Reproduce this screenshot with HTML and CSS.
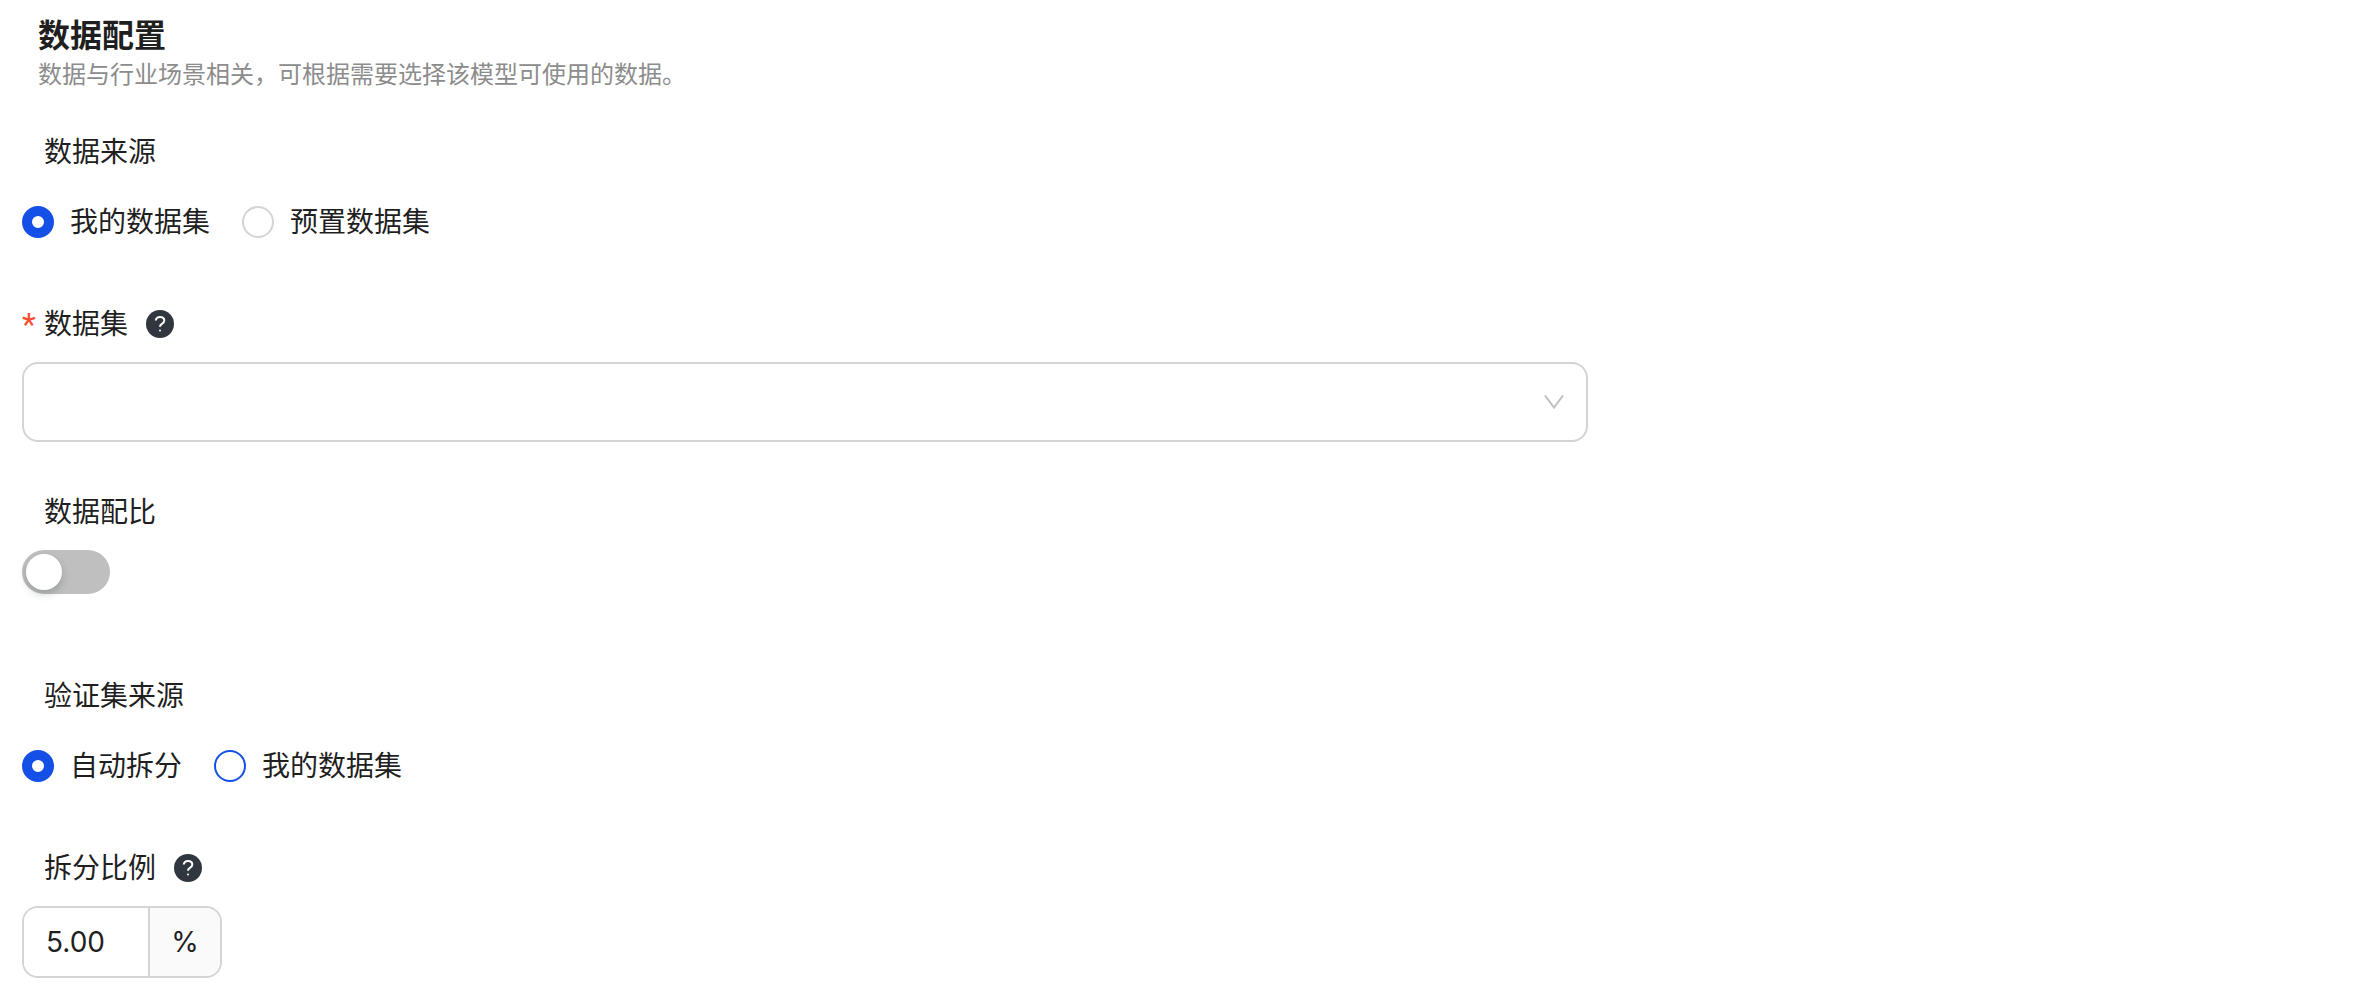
FILE: index.html
```html
<!DOCTYPE html>
<html lang="zh-CN">
<head>
    <meta charset="UTF-8">
    <meta name="viewport" content="width=device-width, initial-scale=1.0">
    <title>数据配置</title>
    <link rel="stylesheet" href="styles.css">
</head>
<body>
    <header class="section-header">
        <h1>数据配置</h1>
        <p>数据与行业场景相关，可根据需要选择该模型可使用的数据。</p>
    </header>

    <form class="config-form">
        <div class="form-item" role="radiogroup" aria-labelledby="source-label">
            <div class="form-label" id="source-label">数据来源</div>
            <div class="radio-group">
                <label class="radio"><input type="radio" name="source" checked><span>我的数据集</span></label>
                <label class="radio"><input type="radio" name="source"><span>预置数据集</span></label>
            </div>
        </div>

        <div class="form-item">
            <div class="form-label required">
                <label for="dataset">数据集</label>
                <svg class="help" viewBox="0 0 28 28" aria-hidden="true">
                    <circle cx="14" cy="14" r="14"/>
                    <path d="M9.800 10.500C10 8.300 11.700 6.900 14 6.900c2.500 0 4.300 1.400 4.300 3.600 0 1.800-1 2.600-2.400 3.400-1.300.7-1.900 1.300-1.900 2.900"/>
                    <circle class="dot" cx="14" cy="20.500" r="1"/>
                </svg>
            </div>
            <div class="select-wrap">
                <select id="dataset">
                    <option value=""></option>
                </select>
                <svg class="arrow" viewBox="0 0 20 14" aria-hidden="true">
                    <path d="M1 .5L10 12.500 19 .5"/>
                </svg>
            </div>
        </div>

        <div class="form-item">
            <div class="form-label"><label for="ratio">数据配比</label></div>
            <div class="switch-row">
                <input type="checkbox" role="switch" class="switch" id="ratio">
            </div>
        </div>

        <div class="form-item" role="radiogroup" aria-labelledby="valid-label">
            <div class="form-label" id="valid-label">验证集来源</div>
            <div class="radio-group">
                <label class="radio"><input type="radio" name="valid" checked><span>自动拆分</span></label>
                <label class="radio"><input type="radio" name="valid" class="active"><span>我的数据集</span></label>
            </div>
        </div>

        <div class="form-item">
            <div class="form-label">
                <label for="split">拆分比例</label>
                <svg class="help" viewBox="0 0 28 28" aria-hidden="true">
                    <circle cx="14" cy="14" r="14"/>
                    <path d="M9.800 10.500C10 8.300 11.700 6.900 14 6.900c2.500 0 4.300 1.400 4.300 3.600 0 1.800-1 2.600-2.400 3.400-1.300.7-1.900 1.300-1.900 2.900"/>
                    <circle class="dot" cx="14" cy="20.500" r="1"/>
                </svg>
            </div>
            <div class="input-group">
                <input type="text" id="split" value="5.00">
                <span class="addon">%</span>
            </div>
        </div>
    </form>
</body>
</html>
```

FILE: styles.css
```css
* {
    box-sizing: border-box;
}

body {
    margin: 0;
    padding: 16px 4px 24px 22px;
    background-color: #fff;
    color: #1f1f1f;
    font-family: Inter, "Noto Sans CJK SC", sans-serif;
    font-size: 28px;
    line-height: 44px;
}

.section-header {
    padding-left: 16px;
    margin-bottom: 36px;
}

h1 {
    margin: 0;
    font-size: 32px;
    line-height: 40px;
    font-weight: bold;
}

.section-header p {
    margin: 0;
    color: #8c8c8c;
    font-size: 24px;
    line-height: 38px;
}

.config-form {
    display: flex;
    flex-direction: column;
    gap: 48px;
}

.form-label {
    display: flex;
    align-items: center;
    padding-left: 22px;
    margin-bottom: 16px;
}

.required {
    padding-left: 0;
}

.required::before {
    content: "*";
    width: 22px;
    color: #ff4d30;
    font-family: Roboto, sans-serif;
    font-size: 32px;
}

.help {
    width: 28px;
    height: 28px;
    margin-left: 18px;
}

.help circle {
    fill: #30373f;
}

.help path {
    fill: none;
    stroke: #fff;
    stroke-width: 2;
}

.help .dot {
    fill: #fff;
}

.radio-group {
    display: flex;
    align-items: center;
    gap: 32px;
    height: 64px;
}

.radio {
    display: flex;
    align-items: center;
    gap: 16px;
}

.radio input {
    appearance: none;
    width: 32px;
    height: 32px;
    margin: 0;
    border: 2px solid #d4d4d4;
    border-radius: 50%;
    background-color: #fff;
}

.radio input:checked {
    border: 10px solid #1450e6;
}

.radio input.active {
    border-color: #1450e6;
}

.select-wrap {
    position: relative;
    width: 67%;
}

.select-wrap select {
    display: block;
    appearance: none;
    width: 100%;
    height: 80px;
    padding: 0 64px 0 22px;
    border: 2px solid #d4d4d4;
    border-radius: 16px;
    background-color: #fff;
    color: inherit;
    font: inherit;
}

.arrow {
    position: absolute;
    top: 33px;
    right: 24px;
    width: 20px;
    height: 14px;
    fill: none;
    stroke: #bfbfbf;
    stroke-width: 2;
    pointer-events: none;
}

.switch-row {
    padding-bottom: 32px;
}

.switch {
    display: block;
    appearance: none;
    width: 88px;
    height: 44px;
    margin: 0;
    padding: 4px;
    border-radius: 22px;
    background-color: #bfbfbf;
}

.switch::before {
    content: "";
    display: block;
    width: 36px;
    height: 36px;
    border-radius: 50%;
    background-color: #fff;
    box-shadow: 0 4px 8px rgba(0, 35, 11, 0.2);
}

.switch:checked {
    background-color: #1450e6;
}

.switch:checked::before {
    margin-left: 44px;
}

.input-group {
    display: flex;
    width: 200px;
    height: 72px;
    border: 2px solid #d4d4d4;
    border-radius: 16px;
    overflow: hidden;
}

.input-group input {
    width: 124px;
    padding: 0 22px;
    border: none;
    color: inherit;
    font: inherit;
}

.addon {
    display: flex;
    flex: 1;
    align-items: center;
    justify-content: center;
    border-left: 2px solid #d4d4d4;
    background-color: #fafafa;
}
```
